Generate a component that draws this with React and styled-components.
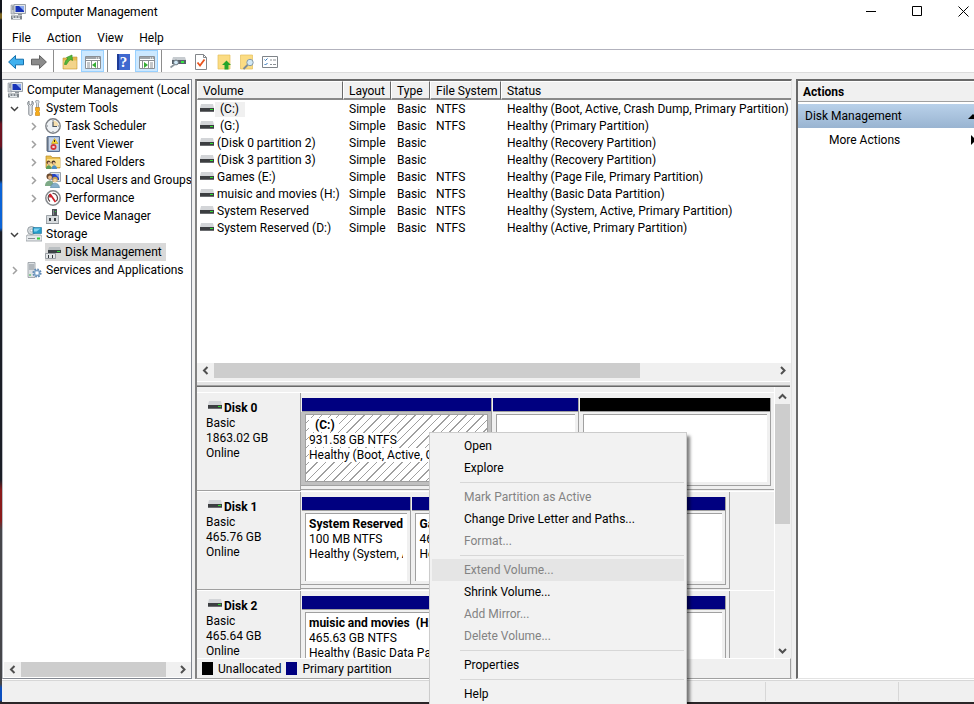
import React from "react";
import styled, { createGlobalStyle, css } from "styled-components";

const volumes = [
  { name: "(C:)", fs: "NTFS", status: "Boot, Active, Crash Dump, Primary Partition", letter: true, selected: true },
  { name: "(G:)", fs: "NTFS", status: "Primary Partition", letter: true },
  { name: "(Disk 0 partition 2)", fs: "", status: "Recovery Partition" },
  { name: "(Disk 3 partition 3)", fs: "", status: "Recovery Partition" },
  { name: "Games (E:)", fs: "NTFS", status: "Page File, Primary Partition" },
  { name: "muisic and movies (H:)", fs: "NTFS", status: "Basic Data Partition" },
  { name: "System Reserved", fs: "NTFS", status: "System, Active, Primary Partition" },
  { name: "System Reserved (D:)", fs: "NTFS", status: "Active, Primary Partition" },
];

const disks = [
  {
    name: "Disk 0",
    size: "1863.02 GB",
    parts: [
      { grow: 191, title: "(C:)", size: "931.58 GB NTFS", status: "Healthy (Boot, Active, Crash Dump", selected: true },
      { grow: 87 },
      { grow: 192, free: true },
    ],
  },
  {
    name: "Disk 1",
    size: "465.76 GB",
    short: true,
    parts: [
      { grow: 110, title: "System Reserved", size: "100 MB NTFS", status: "Healthy (System, Active, Primary" },
      { grow: 315, title: "Games  (E:)", size: "465.66 GB NTFS", status: "Healthy (Page File, Primary Partition)" },
    ],
  },
  {
    name: "Disk 2",
    size: "465.64 GB",
    short: true,
    parts: [
      { grow: 1, title: "muisic and movies  (H:)", size: "465.63 GB NTFS", status: "Healthy (Basic Data Partition)" },
    ],
  },
];

const menuGroups = [
  [{ text: "Open" }, { text: "Explore" }],
  [
    { text: "Mark Partition as Active", disabled: true },
    { text: "Change Drive Letter and Paths..." },
    { text: "Format...", disabled: true },
  ],
  [
    { text: "Extend Volume...", disabled: true, hot: true },
    { text: "Shrink Volume..." },
    { text: "Add Mirror...", disabled: true },
    { text: "Delete Volume...", disabled: true },
  ],
  [{ text: "Properties" }],
  [{ text: "Help" }],
];

/* ---------- icons ---------- */

const Svg = ({ w = 16, h = 16, children }) => (
  <svg width={w} height={h} viewBox={`0 0 ${w} ${h}`} aria-hidden="true">
    {children}
  </svg>
);

const DriveIcon = () => (
  <Svg w={14} h={11}>
    <path d="M1 0h12l1 4H0z" fill="#d3d5d8" />
    <rect y="4" width="14" height="4" fill="#3c3e41" />
    <rect y="7" width="14" height="1" fill="#6b6d70" />
    <rect x="10" y="5" width="3" height="1" fill="#2fe02f" />
  </Svg>
);

const ComputerIcon = () => (
  <Svg>
    <path d="M1 1h4v9H1z" fill="#c9ced3" stroke="#8b9299" strokeWidth=".6" />
    <path d="M2 3h2M2 5h2" stroke="#6f767d" />
    <path d="M4 .5h11.500v9H4z" fill="#e3e7ea" stroke="#9aa1a8" />
    <path d="M5.500 2h8.500v6H5.500z" fill="#1733b8" />
    <path d="M9 2h5v5z" fill="#8aa8f0" />
    <path d="M8 10h4v1H8z" fill="#8f969c" />
    <path d="M1 11.500h11v4H1z" fill="#7f868c" />
    <path d="M2 12.500h2v1H2zM5 12.500h2v1H5zM8 12.500h2v1H8zM3 14h7v1H3z" fill="#e8ecef" />
  </Svg>
);

const ToolsIcon = () => (
  <Svg>
    <path d="M3 1v3l1.500 1L6 4V1c1.500.7 2 3.500.2 5v8c0 2-3.400 2-3.400 0V6C1 4.500 1.500 1.700 3 1z" fill="#e4e7e9" stroke="#777e84" strokeWidth=".9" />
    <path d="M11 0c2 0 2.500 2 1.500 3.500V8h-2V3.500C9.500 2 9 .5 11 0z" fill="#dfe3e6" stroke="#7b8288" strokeWidth=".7" />
    <path d="M9.500 7.500h4v3l-.7 1 .7 1v3h-4v-3l.7-1-.7-1z" fill="#f5ac1b" stroke="#c77c08" strokeWidth=".6" />
  </Svg>
);

const ClockIcon = () => (
  <Svg>
    <circle cx="8" cy="8" r="7.200" fill="#eef1f4" stroke="#7d8186" strokeWidth="1.400" />
    <path d="M8 2.500A5.500 5.500 0 0 1 13.500 8H8z" fill="#f6dfae" />
    <path d="M8 3.500V8.500h4" stroke="#4b5660" fill="none" strokeWidth="1.200" />
    <path d="M8 2v1M8 13v1M2 8h1M13 8h1" stroke="#7b8288" />
  </Svg>
);

const EventIcon = () => (
  <Svg>
    <path d="M2.500.5h12v15h-12z" fill="#a9bfdc" stroke="#587096" />
    <path d="M4 3h9M4 5h9M4 7h9M4 9h9M4 11h9M4 13h9" stroke="#dfe8f4" />
    <path d="M1 2h3M1 4h3M1 6h3M1 8h3M1 10h3M1 12h3M1 14h3" stroke="#6a7077" />
    <path d="m9.500 2.500 3.500 5H6.500z" fill="#ffd528" stroke="#b48c00" strokeWidth=".5" />
    <path d="M9.500 4v2" stroke="#222" />
    <circle cx="8.500" cy="11" r="3" fill="#d3373b" />
    <path d="m7.500 10 2 2m0-2-2 2" stroke="#fff" />
  </Svg>
);

const SharedIcon = () => (
  <Svg>
    <path d="M1 2h5l1 1.500h8V14H1z" fill="#e9bd4c" stroke="#b98d28" strokeWidth=".7" />
    <path d="M2 5h13v8H2z" fill="#fbe08c" />
    <circle cx="3.500" cy="8.500" r="2" fill="#6b4a30" />
    <circle cx="8.500" cy="8.500" r="2" fill="#4a3527" />
    <circle cx="4" cy="9.300" r="1.200" fill="#eabf95" />
    <circle cx="8.800" cy="9.300" r="1.200" fill="#eabf95" />
    <path d="M1 15c0-5 5.500-5 5.500 0z" fill="#5d9d5a" />
    <path d="M6.500 15c0-5 5.500-5 5.500 0z" fill="#4d8fc5" />
  </Svg>
);

const UsersIcon = () => (
  <Svg>
    <path d="M5 .5h10.500v9H5z" fill="#e1e5e9" stroke="#9ba3ab" />
    <path d="M6.500 2H14v6H6.500z" fill="#2443c6" />
    <path d="M10 2h4v4z" fill="#89a6ef" />
    <circle cx="4.500" cy="4.500" r="3" fill="#6c4a2e" />
    <circle cx="5" cy="5.500" r="1.900" fill="#e6b98e" />
    <path d="M0 14c0-7 9-7 9 0z" fill="#7eaa87" />
    <circle cx="10" cy="7.500" r="2.700" fill="#c6a04e" />
    <circle cx="10" cy="8.500" r="1.800" fill="#f0cda2" />
    <path d="M5.500 16c0-6.500 9-6.500 9 0z" fill="#86aec9" stroke="#53809f" strokeWidth=".5" />
  </Svg>
);

const PerformanceIcon = () => (
  <Svg>
    <circle cx="8" cy="8" r="7.200" fill="#fff" stroke="#84888c" strokeWidth="1.500" />
    <path d="M5 11.500A4.500 4.500 0 0 1 5 4.200M7.500 3.500a4.500 4.500 0 0 1 3.700 7.600" fill="none" stroke="#5a4a4a" strokeWidth="1.200" />
    <path d="m5 4 5.500 8M5 4v3.500" fill="none" stroke="#d0202a" strokeWidth="1.800" />
  </Svg>
);

const DeviceIcon = () => (
  <Svg>
    <path d="M1.500 7.500h12v8h-12z" fill="#d8dcdf" stroke="#8b9298" strokeWidth=".8" />
    <path d="M7 1h5v7H7z" fill="#4d5257" />
    <path d="M8 2h1v5H8z" fill="#838a90" />
    <path d="M10 3h1v1h-1z" fill="#35db40" />
    <path d="M4 10h2v3H4zM9 10h2v3H9z" fill="#3b4045" />
    <path d="M1 15h13v1H1z" fill="#8b9298" />
  </Svg>
);

const StorageIcon = () => (
  <Svg>
    <circle cx="5.500" cy="4.500" r="4" fill="#d5dadd" stroke="#878e94" strokeWidth=".8" />
    <circle cx="5.500" cy="4.500" r="1.300" fill="#fff" stroke="#878e94" strokeWidth=".5" />
    <path d="M7 1.500h8.500v6H7z" fill="#259cca" stroke="#197199" strokeWidth=".6" />
    <path d="M8 2.500h6.500l-4 3H8z" fill="#7fd1ef" />
    <path d="M1 9h14l1 2v4H0v-4z" fill="#e6e9eb" stroke="#888f95" strokeWidth=".7" />
    <path d="M2 12h7v1H2z" fill="#858c92" />
    <path d="M11 11.500h3v2h-3z" fill="#31cc3b" />
  </Svg>
);

const DiskMgmtIcon = () => (
  <Svg>
    <path d="M4 3h11l1 3H3z" fill="#b9bec1" />
    <path d="M3 6h13v3H3z" fill="#3b4145" />
    <path d="M12 7h3v1h-3z" fill="#34dc40" />
    <path d="M.5 9.500h10v5H.5z" fill="#e4e7e9" stroke="#868d93" strokeWidth=".8" />
    <path d="M3 11h1v3H3zM7 11h1v3H7z" fill="#33383c" />
  </Svg>
);

const ServicesIcon = () => (
  <Svg>
    <path d="M2 .5h7v15H2z" fill="#dce0e3" stroke="#9299a0" strokeWidth=".8" />
    <path d="M3 3h5M3 5h5M3 7h5" stroke="#868e95" />
    <path d="M3 13h2" stroke="#36b545" />
    <circle cx="11" cy="11" r="3.600" fill="#b7d0e8" stroke="#6089b3" strokeWidth="2" strokeDasharray="1.600 1.200" />
    <circle cx="11" cy="11" r="2.700" fill="#bfd6eb" stroke="#6089b3" strokeWidth=".7" />
    <circle cx="11" cy="11" r="1.200" fill="#fff" />
  </Svg>
);

const ArrowIcon = ({ back }) => (
  <Svg>
    {back ? (
      <path d="M.6 8 7.500 1.500v3.700h8v5.600h-8v3.700z" fill="#3fb0ee" stroke="#1470ad" />
    ) : (
      <path d="M15.400 8 8.500 1.500v3.700h-8v5.600h8v3.700z" fill="#8b8b8b" stroke="#606060" />
    )}
  </Svg>
);

const FolderUpIcon = () => (
  <Svg>
    <path d="M1 4h9l1-1h4v12H1z" fill="#e6b94f" stroke="#c29436" strokeWidth=".6" />
    <path d="M1.500 6.500h13v8h-13z" fill="#f3d48a" />
    <path d="M2.500 10.500C3 7 4 5.500 6 4.800L4.500 3.500 10 1l.5 5.500-1.700-1C7 6.500 6 8 4.500 10.500z" fill="#54b83a" stroke="#2f8a1f" strokeWidth=".6" />
  </Svg>
);

const PaneIcon = ({ right }) => (
  <Svg>
    <path d="M.5 2.500h15v12H.5z" fill="#fff" stroke="#8b8f94" />
    <path d="M1 3h14v2H1z" fill="#9fa4a9" />
    <path d="M11 4h1M13 4h1" stroke="#fff" />
    <path d="M1 6.500h14" stroke="#8b8f94" />
    <path d={right ? "M9.500 7v7M3.500 7v7" : "M6.500 7v7M12.500 7v7"} stroke="#8b8f94" />
    <path d={right ? "M11 9h3M11 11h3M11 13h3" : "M2 9h3M2 11h3M2 13h3"} stroke="#8b9095" />
    <path d={right ? "m5 8 4 3-4 3z" : "M11 8l-4 3 4 3z"} fill="#34ad35" />
  </Svg>
);

const HelpIcon = () => (
  <HelpTile>
    <span>?</span>
  </HelpTile>
);

const DriveToolIcon = () => (
  <Svg>
    <path d="M3 3h12l1 3H2z" fill="#c7ccd0" />
    <path d="M2 6h14v4H2z" fill="#56606a" />
    <path d="M11 7h3v2h-3z" fill="#36e543" />
    <circle cx="6" cy="8.500" r="2.400" fill="#cfe7f5" stroke="#6d7880" />
    <path d="m4.500 10.500-4 3" stroke="#8b959c" strokeWidth="1.600" />
  </Svg>
);

const CheckDocIcon = () => (
  <Svg>
    <path d="M2.500.5h8l3 3v12h-11z" fill="#fff" stroke="#83878b" />
    <path d="M10.500.5v3h3" fill="none" stroke="#83878b" />
    <path d="m4.500 8.500 2.500 3 4.500-6" fill="none" stroke="#e9531d" strokeWidth="1.800" />
  </Svg>
);

const UpDocIcon = () => (
  <Svg>
    <path d="M2 1h12v14H2z" fill="#fbdc83" stroke="#e4bf5c" strokeWidth=".7" />
    <path d="M10.500 6.500 15 11h-2.500v4.500h-4V11H6z" fill="#26a52a" />
  </Svg>
);

const SearchDocIcon = () => (
  <Svg>
    <path d="M1.500 1h12v14h-12z" fill="#fbdc83" stroke="#e4bf5c" strokeWidth=".7" />
    <circle cx="11" cy="8.500" r="3.200" fill="#d2e9f6" stroke="#879aa7" />
    <path d="m8.500 11-4 4" stroke="#7d8c98" strokeWidth="1.800" />
  </Svg>
);

const ListIcon = () => (
  <Svg>
    <path d="M.5 2.500h15v11H.5z" fill="#fff" stroke="#7f8489" />
    <path d="m2.500 5.500 1 1 2-2M2.500 10l1 1 2-2" fill="none" stroke="#2d72b8" />
    <path d="M8 6h2M11 6h3M8 10.500h2M11 10.500h3" stroke="#8b9095" />
  </Svg>
);

const Chevron = ({ dir, color = "#505050", thick = 2 }) => {
  const paths = {
    left: "M6.500 1 3 4.500 6.500 8",
    right: "M3 1l3.500 3.500L3 8",
    up: "M1 6.500 4.500 3 8 6.500",
    down: "M1 3l3.500 3.500L8 3",
  };
  return (
    <Svg w={9} h={9}>
      <path d={paths[dir]} fill="none" stroke={color} strokeWidth={thick} />
    </Svg>
  );
};

const treeItems = [
  { text: "Computer Management (Local", icon: <ComputerIcon />, level: 0 },
  { text: "System Tools", icon: <ToolsIcon />, level: 1, state: "open" },
  { text: "Task Scheduler", icon: <ClockIcon />, level: 2, state: "closed" },
  { text: "Event Viewer", icon: <EventIcon />, level: 2, state: "closed" },
  { text: "Shared Folders", icon: <SharedIcon />, level: 2, state: "closed" },
  { text: "Local Users and Groups", icon: <UsersIcon />, level: 2, state: "closed" },
  { text: "Performance", icon: <PerformanceIcon />, level: 2, state: "closed" },
  { text: "Device Manager", icon: <DeviceIcon />, level: 2 },
  { text: "Storage", icon: <StorageIcon />, level: 1, state: "open" },
  { text: "Disk Management", icon: <DiskMgmtIcon />, level: 2, selected: true },
  { text: "Services and Applications", icon: <ServicesIcon />, level: 1, state: "closed" },
];

const toolGroups = [
  [
    { label: "Back", icon: <ArrowIcon back /> },
    { label: "Forward", icon: <ArrowIcon /> },
  ],
  [
    { label: "Up one level", icon: <FolderUpIcon /> },
    { label: "Console tree", icon: <PaneIcon />, on: true },
  ],
  [
    { label: "Help", icon: <HelpIcon /> },
    { label: "Action pane", icon: <PaneIcon right />, on: true },
  ],
  [
    { label: "Rescan disks", icon: <DriveToolIcon /> },
    { label: "Properties", icon: <CheckDocIcon /> },
    { label: "Open", icon: <UpDocIcon /> },
    { label: "Explore", icon: <SearchDocIcon /> },
    { label: "Settings", icon: <ListIcon /> },
  ],
];

const Partition = ({ part }) => (
  <PartCell $grow={part.grow}>
    <PartBar $free={part.free} />
    <PartFrame $selected={part.selected}>
      <PartBox $selected={part.selected}>
        {part.title && (
          <>
            <PartLine>
              <PartTitle $indent={part.selected}>{part.title}</PartTitle>
            </PartLine>
            <PartLine>
              <span>{part.size}</span>
            </PartLine>
            <PartLine>
              <span>{part.status}</span>
            </PartLine>
          </>
        )}
      </PartBox>
    </PartFrame>
  </PartCell>
);

const App = () => {
  return (
    <>
      <GlobalStyle />
      <Desktop>
        <Window>
          <TitleBar>
            <ComputerIcon />
            <Title>Computer Management</Title>
            <WindowButton aria-label="Minimize">
              <Svg w={11} h={11}>
                <path d="M0 5.500h10" stroke="#000" />
              </Svg>
            </WindowButton>
            <WindowButton aria-label="Maximize">
              <Svg w={11} h={11}>
                <path d="M.5.5h9v9h-9z" fill="none" stroke="#000" />
              </Svg>
            </WindowButton>
            <WindowButton aria-label="Close">
              <Svg w={11} h={11}>
                <path d="m.5.5 10 10m0-10-10 10" stroke="#000" />
              </Svg>
            </WindowButton>
          </TitleBar>
          <MenuBar>
            {["File", "Action", "View", "Help"].map((m) => (
              <MenuButton key={m}>{m}</MenuButton>
            ))}
          </MenuBar>
          <Toolbar>
            {toolGroups.map((group, i) => (
              <ToolGroup key={i}>
                {group.map((tool) => (
                  <ToolButton key={tool.label} aria-label={tool.label} $on={tool.on}>
                    {tool.icon}
                  </ToolButton>
                ))}
              </ToolGroup>
            ))}
          </Toolbar>

          <Panes>
            <TreePane>
              <Tree>
                {treeItems.map((item) => (
                  <TreeRow key={item.text} $level={item.level}>
                    {item.level > 0 && (
                      <Expander>
                        {item.state === "open" && <Chevron dir="down" color="#404040" thick={1.5} />}
                        {item.state === "closed" && <Chevron dir="right" color="#a0a0a0" thick={1.5} />}
                      </Expander>
                    )}
                    <TreeLabel $selected={item.selected}>
                      {item.icon}
                      <span>{item.text}</span>
                    </TreeLabel>
                  </TreeRow>
                ))}
              </Tree>
              <HScroll>
                <ScrollButton aria-label="Scroll left">
                  <Chevron dir="left" />
                </ScrollButton>
                <HTrack>
                  <HThumb $size="95%" />
                </HTrack>
                <ScrollButton aria-label="Scroll right">
                  <Chevron dir="right" />
                </ScrollButton>
              </HScroll>
            </TreePane>

            <MainPane>
              <VolumeArea>
                <VolumeTable>
                  <colgroup>
                    <col width="146" />
                    <col width="48" />
                    <col width="39" />
                    <col width="71" />
                    <col />
                  </colgroup>
                  <thead>
                    <tr>
                      <th>Volume</th>
                      <th>Layout</th>
                      <th>Type</th>
                      <th>File System</th>
                      <th>Status</th>
                    </tr>
                  </thead>
                  <tbody>
                    {volumes.map((v) => (
                      <tr key={v.name}>
                        <td>
                          <VolumeName>
                            <DriveIcon />
                            <VolumeText $letter={v.letter} $selected={v.selected}>
                              {v.name}
                            </VolumeText>
                          </VolumeName>
                        </td>
                        <td>Simple</td>
                        <td>Basic</td>
                        <td>{v.fs}</td>
                        <td>Healthy ({v.status})</td>
                      </tr>
                    ))}
                  </tbody>
                </VolumeTable>
              </VolumeArea>
              <HScroll>
                <ScrollButton aria-label="Scroll left">
                  <Chevron dir="left" />
                </ScrollButton>
                <HTrack>
                  <HThumb $size="76%" />
                </HTrack>
                <ScrollButton aria-label="Scroll right">
                  <Chevron dir="right" />
                </ScrollButton>
              </HScroll>
              <Splitter />
              <DiskArea>
                <DiskList>
                  {disks.map((disk) => (
                    <DiskRow key={disk.name}>
                      <DiskInfo>
                        <DiskName>
                          <DriveIcon />
                          {disk.name}
                        </DiskName>
                        <p>Basic</p>
                        <p>{disk.size}</p>
                        <p>Online</p>
                      </DiskInfo>
                      <DiskParts>
                        <PartStrip $short={disk.short}>
                          {disk.parts.map((part, i) => (
                            <Partition key={i} part={part} />
                          ))}
                        </PartStrip>
                      </DiskParts>
                    </DiskRow>
                  ))}
                </DiskList>
                <VScroll>
                  <ScrollButton aria-label="Scroll up">
                    <Chevron dir="up" />
                  </ScrollButton>
                  <VTrack>
                    <VThumb />
                  </VTrack>
                  <ScrollButton aria-label="Scroll down">
                    <Chevron dir="down" />
                  </ScrollButton>
                </VScroll>
              </DiskArea>
              <Legend>
                <Swatch $color="#000" />
                <span>Unallocated</span>
                <Swatch $color="#000080" />
                <span>Primary partition</span>
              </Legend>
            </MainPane>

            <ActionsPane>
              <ActionsTitle>Actions</ActionsTitle>
              <ActionsHeader>
                Disk Management
                <Svg w={10} h={5}>
                  <path d="M5 0l5 5H0z" />
                </Svg>
              </ActionsHeader>
              <ActionsItem>
                More Actions
                <Svg w={6} h={10}>
                  <path d="M0 0l5 5-5 5z" />
                </Svg>
              </ActionsItem>
            </ActionsPane>
          </Panes>

          <StatusBar>
            <StatusCell />
            <StatusCell $width="133px" />
            <StatusCell $width="76px" />
          </StatusBar>
        </Window>

        <ContextMenu role="menu">
          {menuGroups.map((group, i) => (
            <MenuGroup key={i}>
              {group.map((item) => (
                <MenuItem key={item.text} role="menuitem" disabled={item.disabled} $hot={item.hot}>
                  {item.text}
                </MenuItem>
              ))}
            </MenuGroup>
          ))}
        </ContextMenu>
      </Desktop>
    </>
  );
};

export default App;

const GlobalStyle = createGlobalStyle`
  * {
    box-sizing: border-box;
  }

  body {
    margin: 0;
    overflow: hidden;
    font-family: Roboto, "Open Sans", sans-serif;
    font-size: 12px;
    color: #000;
  }

  button {
    font: inherit;
    color: inherit;
    background: none;
    border: 0;
    padding: 0;
  }

  p {
    margin: 0;
  }

  svg {
    display: block;
    flex: none;
  }
`;

const Desktop = styled.div`
  position: relative;
  height: 100vh;
  padding: 0 0 2px 2px;
  overflow: hidden;
  background: linear-gradient(
    #12151c 0 12px,
    #7a6320 14px 18px,
    #171a22 20px 120px,
    #6d1220 124px 146px,
    #1b2433 150px 180px,
    #0b63d6 184px 228px,
    #1a1d26 232px 480px,
    #8a1a1a 490px 520px,
    #45464a 530px 684px,
    #0b4fc0 688px 700px,
    #2b2628 702px
  );
`;

const Window = styled.div`
  height: 100%;
  display: flex;
  flex-direction: column;
  background: #f0f0f0;
`;

const TitleBar = styled.header`
  height: 23px;
  display: flex;
  align-items: center;
  padding-left: 8px;
  background: #fff;
`;

const Title = styled.h1`
  flex: 1;
  margin: 0 0 0 5px;
  font-size: 12px;
  font-weight: 400;
`;

const WindowButton = styled.button`
  width: 46px;
  height: 22px;
  display: flex;
  align-items: center;
  justify-content: center;

  &:last-child {
    width: 34px;
    padding-left: 12px;
  }
`;

const MenuBar = styled.nav`
  height: 27px;
  display: flex;
  align-items: center;
  gap: 16px;
  padding: 3px 10px 0;
  background: #fff;
  border-bottom: 1px solid #b2b2bd;
`;

const MenuButton = styled.button`
  line-height: 18px;
`;

const Toolbar = styled.div`
  height: 23px;
  display: flex;
  padding: 0 2px;
  background: #fff;
  border-bottom: 1px solid #dcdcdc;
`;

const ToolGroup = styled.div`
  display: flex;
  padding-right: 3px;

  & + & {
    padding-left: 4px;
    border-left: 1px solid #8d8d8d;
  }
`;

const ToolButton = styled.button`
  width: 23px;
  height: 22px;
  display: flex;
  align-items: center;
  justify-content: center;
  padding-top: 2px;
  border: 1px solid transparent;

  ${(props) =>
    props.$on &&
    css`
      background: #cce8ff;
      border-color: #99d1ff;
    `}
`;

const HelpTile = styled.span`
  width: 13px;
  height: 16px;
  display: flex;
  align-items: center;
  justify-content: center;
  font-family: "Liberation Serif", serif;
  font-size: 15px;
  font-weight: 700;
  color: #fff;
  background: linear-gradient(90deg, #1d3b96 2px, #3f68cf 2px);
`;

const Panes = styled.main`
  flex: 1;
  min-height: 0;
  display: grid;
  grid-template-columns: 190px minmax(0, 1fr) 178px;
  grid-template-rows: minmax(0, 1fr);
  column-gap: 3px;
  padding-top: 6px;
  border-bottom: 1px solid #fff;
`;

const TreePane = styled.aside`
  display: flex;
  flex-direction: column;
  padding: 1px 0 1px 1px;
  background: #fff;
  border: 1px solid #828790;
  border-left-color: #b9bcc2;
`;

const Tree = styled.ul`
  flex: 1;
  margin: 0;
  padding: 0;
  overflow: hidden;
  list-style: none;
`;

const TreeRow = styled.li`
  height: 18px;
  display: flex;
  align-items: center;
  padding-left: ${(props) => [3, 3, 22][props.$level]}px;
  white-space: nowrap;
`;

const Expander = styled.span`
  flex: none;
  width: 19px;
  display: flex;
  padding-left: 3px;
`;

const TreeLabel = styled.span`
  height: 18px;
  display: flex;
  align-items: center;
  gap: 4px;
  padding-right: 4px;
  background: ${(props) => (props.$selected ? "#d9d9d9" : "transparent")};
`;

const HScroll = styled.div`
  flex: none;
  height: 15px;
  display: flex;
  background: #f0f0f0;
`;

const ScrollButton = styled.button`
  flex: none;
  width: 17px;
  height: 15px;
  display: flex;
  align-items: center;
  justify-content: center;
`;

const HTrack = styled.div`
  flex: 1;
`;

const HThumb = styled.div`
  width: ${(props) => props.$size};
  height: 100%;
  background: #cdcdcd;
`;

const MainPane = styled.section`
  min-width: 0;
  margin-right: 1px;
  display: flex;
  flex-direction: column;
  border: solid;
  border-width: 2px 1px 1px 2px;
  border-color: #696969 #e3e3e3 #a0a0a0 #828282;
`;

const VolumeArea = styled.div`
  flex: none;
  height: 282px;
  overflow: hidden;
  background: #fff;
`;

const VolumeTable = styled.table`
  width: 100%;
  table-layout: fixed;
  border-collapse: separate;
  border-spacing: 0;
  white-space: nowrap;

  th {
    height: 19px;
    padding: 2px 0 0 5px;
    font-weight: 400;
    text-align: left;
    line-height: 14px;
    background: #f0f0f0;
    border: 1px solid #fff;
    border-right-color: #696969;
    border-bottom: 2px solid #8a8a8a;
  }

  th:last-child {
    border-right: 0;
  }

  td {
    height: 17px;
    padding: 2px 0 0 6px;
    line-height: 15px;
  }

  td:first-child {
    padding-left: 3px;
  }
`;

const VolumeName = styled.span`
  display: flex;
  align-items: center;
`;

const VolumeText = styled.span`
  margin-left: 1px;
  padding: 0 6px 0 ${(props) => (props.$letter ? 5 : 2)}px;
  background: ${(props) => (props.$selected ? "#f0f0f0" : "transparent")};
`;

const Splitter = styled.div`
  flex: none;
  height: 9px;
  margin-right: 1px;
  background: linear-gradient(#f0f0f0 3px, #fff 3px 4px, #e3e3e3 4px 7px, #a0a0a0 7px 8px, #696969 8px);
`;

const DiskArea = styled.div`
  flex: 1;
  min-height: 0;
  display: flex;
`;

const DiskList = styled.div`
  flex: 1;
  min-width: 0;
  padding-top: 5px;
  overflow: hidden;
`;

const DiskRow = styled.section`
  height: 99px;
  display: flex;
  border-top: 1px solid #fff;
`;

const DiskInfo = styled.div`
  flex: none;
  width: 104px;
  padding: 8px 0 0 9px;
  line-height: 15px;
  border-right: 1px solid #a0a0a0;
  border-bottom: 1px solid #a0a0a0;
`;

const DiskName = styled.h2`
  display: flex;
  gap: 2px;
  margin: 0;
  padding-left: 2px;
  font-size: 12px;
  font-weight: 700;
`;

const DiskParts = styled.div`
  flex: 1;
  min-width: 0;
  padding-bottom: 1px;
`;

const PartStrip = styled.div`
  height: 97px;
  display: flex;
  padding: 5px 3px 3px 0;
  border-bottom: 1px solid #a0a0a0;

  ${(props) =>
    props.$short &&
    css`
      margin-right: 44px;
      border-right: 1px solid #a0a0a0;
    `}
`;

const PartCell = styled.div`
  flex: ${(props) => props.$grow} 1 0;
  min-width: 0;
  display: flex;
  flex-direction: column;
  border: solid #a0a0a0;
  border-width: 0 1px 1px 0;
`;

const PartBar = styled.div`
  flex: none;
  height: 14px;
  margin-left: 1px;
  background: ${(props) => (props.$free ? "#000" : "#000080")};
  border-bottom: 1px solid #a0a0a0;
`;

const PartFrame = styled.div`
  flex: 1;
  min-height: 0;
  display: flex;
  padding: 2px 3px 3px 4px;
  background: ${(props) => (props.$selected ? "#c0c0c0" : "transparent")};
`;

const PartBox = styled.div`
  flex: 1;
  min-width: 0;
  padding: 3px 4px 0 3px;
  overflow: hidden;
  line-height: 15px;
  background: #fff;
  border: solid #a0a0a0;
  border-width: 1px 0 0 1px;

  ${(props) =>
    props.$selected &&
    css`
      border-width: 1px;
      background: repeating-linear-gradient(135deg, #fff 0 5px, #a0a0a0 5px 6px);
    `}
`;

const PartLine = styled.p`
  overflow: hidden;
  white-space: pre;

  span {
    background: #fff;
  }
`;

const PartTitle = styled.span`
  font-weight: 700;
  padding-left: ${(props) => (props.$indent ? 6 : 0)}px;
  padding-right: ${(props) => (props.$indent ? 4 : 0)}px;
`;

const VScroll = styled.div`
  flex: none;
  width: 17px;
  display: flex;
  flex-direction: column;
  align-items: flex-start;
  padding-top: 2px;
  border-left: 1px solid #fff;

  button {
    width: 15px;
  }
`;

const VTrack = styled.div`
  flex: 1;
`;

const VThumb = styled.div`
  width: 15px;
  height: 50%;
  background: #cdcdcd;
`;

const Legend = styled.footer`
  flex: none;
  height: 20px;
  display: flex;
  align-items: center;
  gap: 5px;
  padding-left: 5px;
  border-top: 1px solid #fff;
  border-right: 1px solid #a0a0a0;
`;

const Swatch = styled.i`
  width: 11px;
  height: 13px;
  background: ${(props) => props.$color};
`;

const ActionsPane = styled.aside`
  overflow: hidden;
  background: #fff;
  border: solid;
  border-width: 2px 0 1px 2px;
  border-color: #696969 #e3e3e3 #e3e3e3 #696969;
`;

const ActionsTitle = styled.h2`
  margin: 0 0 2px;
  padding: 2px 0 0 5px;
  font-size: 12px;
  font-weight: 700;
  line-height: 17px;
  background: #f0f0f0;
  border-top: 1px solid #fff;
  border-bottom: 1px solid #a0a0a0;
`;

const ActionsHeader = styled.button`
  width: 100%;
  height: 24px;
  display: flex;
  align-items: center;
  justify-content: space-between;
  padding-left: 7px;
  background: linear-gradient(#b9d1ea, #99b4d1);

  svg {
    margin-right: -4px;
  }
`;

const ActionsItem = styled.button`
  width: 100%;
  height: 24px;
  display: flex;
  align-items: center;
  justify-content: space-between;
  padding-left: 31px;

  svg {
    margin-right: -3px;
  }
`;

const StatusBar = styled.footer`
  height: 22px;
  display: flex;
  padding: 1px 0;
  border-top: 1px solid #d7d7d7;
`;

const StatusCell = styled.div`
  flex: ${(props) => (props.$width ? "none" : 1)};
  width: ${(props) => props.$width};

  & + & {
    border-left: 1px solid #d7d7d7;
  }
`;

const ContextMenu = styled.div`
  position: absolute;
  left: 429px;
  top: 432px;
  width: 258px;
  padding: 2px;
  background: #f2f2f2;
  border: 1px solid #ccc;
  box-shadow: 3px 4px 3px rgba(0, 0, 0, 0.5);
`;

const MenuGroup = styled.div`
  & + &::before {
    content: "";
    display: block;
    height: 1px;
    margin: 3px 0 3px 28px;
    background: #d7d7d7;
  }
`;

const MenuItem = styled.button`
  width: 100%;
  height: 22px;
  display: block;
  padding-left: 32px;
  text-align: left;
  background: ${(props) => (props.$hot ? "#e5e5e5" : "transparent")};

  &:disabled {
    color: #838383;
  }
`;
